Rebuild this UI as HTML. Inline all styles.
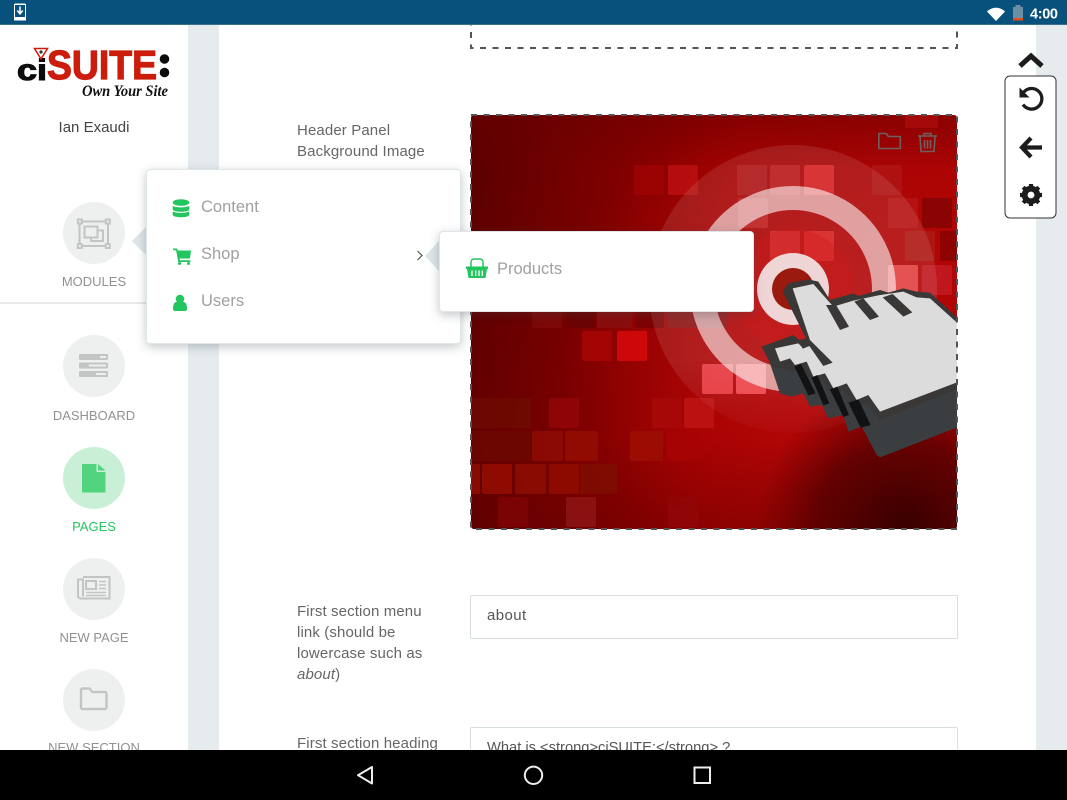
<!DOCTYPE html>
<html><head><meta charset="utf-8"><style>
html,body{margin:0;padding:0;width:1067px;height:800px;overflow:hidden;background:#fff;font-family:"Liberation Sans",sans-serif}
.a{position:absolute;white-space:nowrap}
.lbl{color:#666;font-size:15px;letter-spacing:.12px;line-height:21px}
.nav{color:#8f9292;font-size:13px;text-align:center;width:188px;left:0;line-height:18px}
.c{position:absolute;left:63px;width:62px;height:62px;border-radius:50%;background:#eef0f0}
.m{color:#a0a0a0;font-size:16.5px;line-height:20px}
.box{position:absolute;background:#fff;border:1px solid #e0e6e8;border-radius:4px;box-shadow:0 3px 10px rgba(60,70,80,.3);box-sizing:border-box}
.inp{position:absolute;left:470px;width:488px;height:44px;background:#fff;border:1px solid #d8dfe1;border-radius:2px;box-sizing:border-box}
</style></head><body>
<div class="a" style="left:188px;top:25px;width:31px;height:725px;background:#e6ebee"></div>
<div class="a" style="left:1036px;top:25px;width:31px;height:725px;background:#e6ebee"></div>

<svg class="a" style="left:0;top:0" width="1067" height="800" viewBox="0 0 1067 800">
<defs>
<linearGradient id="bg" x1="0" y1="0" x2="1" y2=".1"><stop offset="0" stop-color="#5a0000"/><stop offset=".3" stop-color="#7e0000"/><stop offset=".55" stop-color="#a00000"/><stop offset="1" stop-color="#ac0404"/></linearGradient>
<radialGradient id="br" gradientUnits="userSpaceOnUse" cx="800" cy="340" r="240"><stop offset="0" stop-color="#c40c0c" stop-opacity=".6"/><stop offset="1" stop-color="#c40c0c" stop-opacity="0"/></radialGradient>
<radialGradient id="dk" gradientUnits="userSpaceOnUse" cx="905" cy="530" r="150"><stop offset="0" stop-color="#380000" stop-opacity="1"/><stop offset=".6" stop-color="#500000" stop-opacity=".75"/><stop offset="1" stop-color="#600000" stop-opacity="0"/></radialGradient>
<linearGradient id="tp" x1="0" y1="0" x2="0" y2="1"><stop offset="0" stop-color="#6a0000" stop-opacity=".5"/><stop offset="1" stop-color="#6a0000" stop-opacity="0"/></linearGradient>
<linearGradient id="bt" x1="0" y1="0" x2="0" y2="1"><stop offset="0" stop-color="#500000" stop-opacity="0"/><stop offset="1" stop-color="#500000" stop-opacity=".3"/></linearGradient>
<linearGradient id="fade" x1="0" y1="0" x2="0" y2="1"><stop offset="0" stop-color="#fff" stop-opacity=".1"/><stop offset=".75" stop-color="#fff" stop-opacity=".1"/><stop offset="1" stop-color="#fff" stop-opacity=".02"/></linearGradient>
<clipPath id="img"><rect x="471" y="115" width="486" height="414" rx="3"/></clipPath>
</defs>
<rect x="471" y="-20" width="486" height="68" fill="none" stroke="#555" stroke-width="2" stroke-dasharray="6 6.5"/>
<g clip-path="url(#img)">
<rect x="471" y="115" width="486" height="414" fill="url(#bg)"/>
<rect x="471" y="115" width="486" height="414" fill="url(#br)"/>
<rect x="471" y="115" width="486" height="55" fill="url(#tp)"/>
<rect x="471" y="440" width="486" height="90" fill="url(#bt)"/>
<g opacity=".85">
<rect x="634" y="165" width="30" height="30" rx="2" fill="#9e0404"/><rect x="668" y="165" width="30" height="30" rx="2" fill="#bb1010"/>
<rect x="737" y="165" width="30" height="30" rx="2" fill="#b01818"/><rect x="770" y="165" width="30" height="30" rx="2" fill="#bc1c1c"/><rect x="804" y="165" width="30" height="30" rx="2" fill="#dc2626"/><rect x="872" y="165" width="30" height="30" rx="2" fill="#b01414"/>
<rect x="905" y="115" width="33" height="13" fill="#a80c0c"/>
<rect x="738" y="198" width="30" height="30" rx="2" fill="#c02020"/><rect x="888" y="198" width="30" height="30" rx="2" fill="#b81414"/><rect x="922" y="198" width="30" height="30" rx="2" fill="#850404"/>
<rect x="770" y="231" width="30" height="30" rx="2" fill="#d42828"/><rect x="804" y="231" width="30" height="30" rx="2" fill="#dc2424"/><rect x="905" y="231" width="30" height="30" rx="2" fill="#ae1a14"/><rect x="940" y="231" width="30" height="30" rx="2" fill="#890202"/>
<rect x="888" y="265" width="30" height="30" rx="2" fill="#ea4a4a"/><rect x="922" y="265" width="30" height="30" rx="2" fill="#c21a22"/>
<rect x="532" y="298" width="30" height="30" rx="2" fill="#7e0a0a"/><rect x="567" y="298" width="29" height="30" rx="2" fill="#690404"/><rect x="597" y="298" width="35" height="30" rx="2" fill="#8a1010"/><rect x="635" y="298" width="29" height="30" rx="2" fill="#7a0404"/><rect x="668" y="298" width="60" height="30" rx="2" fill="#8a1414"/>
<rect x="582" y="331" width="30" height="30" rx="2" fill="#a80404"/><rect x="617" y="331" width="30" height="30" rx="2" fill="#d80a0a"/>
<rect x="702" y="364" width="31" height="30" rx="2" fill="#f04048"/><rect x="736" y="364" width="30" height="30" rx="2" fill="#f85058"/>
<rect x="471" y="398" width="60" height="30" fill="#6e0a02"/><rect x="549" y="398" width="30" height="30" rx="2" fill="#930606"/><rect x="652" y="398" width="30" height="30" rx="2" fill="#a80808"/><rect x="684" y="398" width="30" height="30" rx="2" fill="#c01414"/>
<rect x="471" y="431" width="60" height="30" fill="#6c0802"/><rect x="532" y="431" width="31" height="30" rx="2" fill="#8f0c04"/><rect x="565" y="431" width="33" height="30" rx="2" fill="#950e04"/><rect x="630" y="431" width="33" height="30" rx="2" fill="#9e0e04"/><rect x="667" y="431" width="30" height="30" rx="2" fill="#a80404"/>
<rect x="471" y="464" width="9" height="30" fill="#8e0e02"/><rect x="482" y="464" width="30" height="30" rx="2" fill="#960e02"/><rect x="515" y="464" width="31" height="30" rx="2" fill="#8e0e02"/><rect x="549" y="464" width="30" height="30" rx="2" fill="#920c02"/><rect x="580" y="464" width="37" height="30" fill="#7f0e02"/>
<rect x="498" y="497" width="30" height="30" rx="2" fill="#7e0404"/><rect x="566" y="497" width="30" height="30" rx="2" fill="#8f1414"/><rect x="668" y="497" width="30" height="30" rx="2" fill="#900606"/>
</g>
<rect x="471" y="115" width="486" height="414" fill="url(#dk)"/>
<circle cx="793" cy="289" r="144" fill="url(#fade)"/>
<path fill-rule="evenodd" d="M793 186a103 103 0 1 0 .01 0zM793 210a79 79 0 1 1-.01 0z" fill="#fff" fill-opacity=".58"/>
<circle cx="793" cy="289" r="60" fill="#d01818" fill-opacity=".35"/>
<circle cx="793" cy="289" r="36" fill="#efd5d5"/><circle cx="793" cy="289" r="21" fill="#9a1a0e"/>
<g transform="translate(700,110) scale(.33333)">
<path fill="#3a3e40" d="M210 760L240 850L275 860L310 850L330 890L365 885L385 925L430 915L445 965L485 950L530 1035L540 1042L790 945L790 800L540 880L300 740Z"/>
<path fill="#3a3737" d="M248 545L265 520L325 508L355 515L390 570L460 550L475 558L540 540L565 548L610 535L650 545L690 548L790 640L790 830L540 930L500 880L470 892L430 842L395 855L370 812L340 820L310 775L280 785L245 775L215 770L185 710L280 675L298 690L318 685Z"/>
<path fill="#dcdcdc" d="M278 535L340 522L400 590L460 572L540 555L610 545L650 562L690 565L790 655L790 810L540 905L505 855L470 870L440 820L400 835L375 790L340 800L320 755L285 765L270 745L240 755L225 715L295 700L310 715L335 705Z"/>
<path fill="#3a3737" d="M378 585L408 585L447 650L420 660ZM463 575L490 565L537 620L510 630ZM548 562L578 552L637 607L610 620ZM298 695L325 685L398 758L370 768L328 708L308 716Z"/>
<path fill="#111214" d="M283 770L303 762L347 850L325 856ZM335 803L352 795L388 880L370 886ZM390 838L412 830L447 915L430 921ZM445 878L475 868L512 945L482 953Z"/>
</g>
<g fill="none" stroke="#6e6060" stroke-width="1.600">
<path d="M878.800 148.500V133.500h7.500l2 3h12v12z" stroke-linejoin="round"/>
<path d="M918 136h19M924 136v-2.500h7V136M920 136.500l1 15h13l1-15M924.500 140v8.500M927.500 140v8.500M930.500 140v8.500"/>
</g>
</g>
<rect x="471" y="115" width="486" height="414" fill="none" stroke="#555" stroke-width="2" stroke-dasharray="6 6.5"/>
<rect x="0" y="302" width="148" height="2" fill="#e6e8ea"/>
</svg>

<!-- logo -->
<svg class="a" style="left:0;top:40px" width="188" height="70" viewBox="0 40 188 70">
<text x="17" y="80" font-family="Liberation Sans" font-weight="700" font-size="30" fill="#0c0c0c" stroke="#0c0c0c" stroke-width="1.100" textLength="30" lengthAdjust="spacingAndGlyphs">ci</text>
<text x="47" y="79" font-family="Liberation Sans" font-weight="700" font-size="41" fill="#cc1c0c" stroke="#cc1c0c" stroke-width="1.200" textLength="110" lengthAdjust="spacingAndGlyphs">SUITE</text>
<path d="M34.500 48.500h13l-6.500 10.500z" fill="#fff" stroke="#cc1c0c" stroke-width="1.500"/>
<circle cx="41" cy="52" r="1.600" fill="#333"/>
<circle cx="164.500" cy="59" r="4.800" fill="#0c0c0c"/><circle cx="164.500" cy="72.500" r="4.800" fill="#0c0c0c"/>
<text x="82" y="96" font-family="Liberation Serif" font-style="italic" font-weight="700" font-size="16" fill="#111" textLength="86" lengthAdjust="spacingAndGlyphs">Own Your Site</text>
</svg>
<div class="a" style="left:0;width:188px;text-align:center;top:119px;font-size:15px;color:#444;line-height:18px">Ian Exaudi</div>

<!-- sidebar -->
<div class="c" style="top:202px"></div>
<svg class="a" style="left:75px;top:217px" width="38" height="34" viewBox="75 217 38 34" fill="none" stroke="#c3c5c5" stroke-width="2">
<path d="M81 221.500h25M81 246h25M79.500 223.500v21M108 223.500v21"/>
<rect x="77.800" y="219.500" width="4" height="4"/><rect x="105.800" y="219.500" width="4" height="4"/><rect x="77.800" y="244" width="4" height="4"/><rect x="105.800" y="244" width="4" height="4"/>
<rect x="84.500" y="226.500" width="13" height="11"/><path d="M97.500 230.500h5.500v10.500h-12v-3.500"/>
</svg>
<div class="a nav" style="top:273px">MODULES</div>
<div class="c" style="top:335px"></div>
<svg class="a" style="left:79px;top:354px" width="30" height="24" viewBox="79 354 30 24">
<rect x="79" y="354" width="29" height="6" rx="1" fill="#c3c5c5"/><rect x="79" y="362.500" width="29" height="6" rx="1" fill="#c3c5c5"/><rect x="79" y="371" width="29" height="6" rx="1" fill="#c3c5c5"/>
<rect x="100" y="356" width="6" height="2" fill="#eef0f0"/><rect x="89" y="364.500" width="17" height="2" fill="#eef0f0"/><rect x="96" y="373" width="10" height="2" fill="#eef0f0"/>
</svg>
<div class="a nav" style="top:407px">DASHBOARD</div>
<div class="c" style="top:447px;background:#c9f0d6"></div>
<svg class="a" style="left:81px;top:463px" width="26" height="30" viewBox="81 463 26 30"><path d="M82 464h14.500v8h9v20.500h-23.500z" fill="#52d47e"/><path d="M98 464l7.500 6.500h-7.500z" fill="#52d47e"/></svg>
<div class="a nav" style="top:518px;color:#22c55e">PAGES</div>
<div class="c" style="top:558px"></div>
<svg class="a" style="left:76px;top:575px" width="36" height="26" viewBox="76 575 36 26" fill="none" stroke="#c3c5c5" stroke-width="2">
<path d="M83 577h26.500v21.500h-29a2.500 2.500 0 0 1-2.500-2.500v-16.500h5v17"/>
<rect x="86" y="581" width="10" height="8"/><path d="M99 581.500h7M99 585h7M99 588.500h7M86 592.500h20M86 595.500h20" stroke-width="1.500"/>
</svg>
<div class="a nav" style="top:629px">NEW PAGE</div>
<div class="c" style="top:669px"></div>
<svg class="a" style="left:79px;top:687px" width="30" height="25" viewBox="79 687 30 25" fill="none" stroke="#c3c5c5" stroke-width="2.400"><path d="M81 708V690a1.500 1.500 0 0 1 1.500-1.500h7l3 3.500h12.500a1.500 1.500 0 0 1 1.500 1.500v14a1.500 1.500 0 0 1-1.500 1.500h-22.500a1.500 1.500 0 0 1-1.500-1.500z" stroke-linejoin="round"/></svg>
<div class="a nav" style="top:739px">NEW SECTION</div>

<!-- form -->
<div class="a lbl" style="left:297px;top:120px">Header Panel<br>Background Image</div>
<div class="a lbl" style="left:297px;top:601px">First section menu<br>link (should be<br>lowercase such as<br><i>about</i>)</div>
<div class="a lbl" style="left:297px;top:733px">First section heading</div>
<div class="inp" style="top:595px"></div>
<div class="a lbl" style="left:487px;top:605px;color:#555;letter-spacing:.4px">about</div>
<div class="inp" style="top:727px;height:60px"></div>
<div class="a lbl" style="left:487px;top:738px;color:#555;font-size:14.700px;letter-spacing:0">What is &lt;strong&gt;ciSUITE:&lt;/strong&gt; ?</div>

<!-- menu -->
<svg class="a" style="left:130px;top:222px" width="20" height="38"><path d="M2 19L18 3V35Z" fill="#dde5e8"/></svg>
<div class="box" style="left:146px;top:169px;width:315px;height:175px"></div>
<svg class="a" style="left:170px;top:197px" width="24" height="120" viewBox="170 197 24 120" fill="#22c55e">
<ellipse cx="181" cy="202.500" rx="8.300" ry="3.300"/>
<path d="M172.700 205.500c1 2.500 15.600 2.500 16.600 0v4c-1 3-15.600 3-16.600 0zM172.700 211c1 2.500 15.600 2.500 16.600 0v4c-1 3-15.600 3-16.600 0z"/>
<path d="M173 248.500h4l.9 2h13.100l-1 8h-10.300l.3 1.700h10.500v1.800h-12.200l-2.200-11.700h-3.100z"/>
<circle cx="179.500" cy="263.500" r="1.500"/><circle cx="188.500" cy="263.500" r="1.500"/>
<circle cx="180" cy="299" r="4.300"/><path d="M173 309c0-6 2-7 4-7h6c2 0 4 1 4 7 0 1-.8 2-2 2h-10c-1.200 0-2-1-2-2z"/>
</svg>
<div class="a m" style="left:201px;top:197px">Content</div>
<div class="a m" style="left:201px;top:244px">Shop</div>
<div class="a m" style="left:201px;top:291px">Users</div>
<svg class="a" style="left:416px;top:250px" width="8" height="12"><path d="M1.500 1L6 5.500L1.500 10" fill="none" stroke="#555" stroke-width="1.200"/></svg>
<svg class="a" style="left:423px;top:238px" width="18" height="36"><path d="M2 18L16 3V33Z" fill="#dde5e8"/></svg>
<div class="box" style="left:439px;top:231px;width:315px;height:81px"></div>
<svg class="a" style="left:465px;top:258px" width="24" height="22" viewBox="465 258 24 22">
<path d="M471 267v-4.500c0-2.500 1.500-3.500 3-3.500h6c1.500 0 3 1 3 3.500v4.500" fill="none" stroke="#22c55e" stroke-width="1.500"/>
<path d="M466 266.500h22v2.500h-1l-1.500 9h-17l-1.500-9h-1z" fill="#22c55e"/>
<path d="M472 270.500v5.500M475.700 270.500v5.500M479 270.500v5.500M482.300 270.500v5.500" stroke="#fff" stroke-width="1.300"/>
</svg>
<div class="a m" style="left:497px;top:259px">Products</div>

<!-- toolbar -->
<svg class="a" style="left:1004px;top:50px" width="54" height="170" viewBox="1004 50 54 170">
<path d="M1020 66l11-10 11 10" fill="none" stroke="#1c1c1c" stroke-width="5"/>
<rect x="1005" y="76" width="51" height="142" rx="5" fill="#fff" stroke="#333" stroke-width="1"/>
<path d="M1023.800 92a10.300 10.300 0 1 1-.8 12.500" fill="none" stroke="#1c1c1c" stroke-width="3.300"/>
<path d="M1019.500 87.500v10h10z" fill="#1c1c1c"/>
<path d="M1031 138l-9 9.500 9 9.500M1023 147.500h19" fill="none" stroke="#1c1c1c" stroke-width="4.200"/>
<circle cx="1031" cy="195" r="7" fill="none" stroke="#1c1c1c" stroke-width="4.500"/>
<path d="M1031 184v22M1020 195h22M1023.200 187.200l15.600 15.600M1038.800 187.200l-15.600 15.600" stroke="#1c1c1c" stroke-width="4.200"/>
<circle cx="1031" cy="195" r="3.400" fill="#fff"/>
</svg>

<!-- status -->
<div class="a" style="left:0;top:0;width:1067px;height:25px;background:#07517c;border-bottom:1px solid #3d6f8e;box-sizing:border-box"></div>
<svg class="a" style="left:0;top:0" width="1067" height="25">
<path d="M15.500 3.500h9a1.500 1.500 0 0 1 1.500 1.500v15.500h-12v-15.500a1.500 1.500 0 0 1 1.500-1.500z" fill="#fff"/>
<rect x="15" y="5" width="10" height="12" fill="#07517c"/>
<path d="M20 6.500v6.500M17.300 10.500l2.700 3.300 2.700-3.300" fill="none" stroke="#fff" stroke-width="1.500"/>
<path d="M987 11.500c5-5 13-5 18 0l-9 9.500z" fill="#fff"/>
<rect x="1015.500" y="5" width="5" height="2" fill="#6d8fa6"/><rect x="1013" y="7" width="10" height="11" fill="#6d8fa6"/><rect x="1013" y="18" width="10" height="2.500" fill="#e0501c"/>
<text x="1030" y="18.500" font-family="Liberation Sans" font-weight="700" font-size="14.500" fill="#fff" textLength="28">4:00</text>
</svg>

<!-- nav bar -->
<div class="a" style="left:0;top:750px;width:1067px;height:50px;background:#000"></div>
<svg class="a" style="left:0;top:750px" width="1067" height="50" viewBox="0 750 1067 50" fill="none" stroke="#eee" stroke-width="2">
<path d="M372 767v16.500l-14-8.300z" stroke-linejoin="round"/>
<circle cx="533.500" cy="775.300" r="8.700"/>
<rect x="694.500" y="767.500" width="15.500" height="15.500"/>
</svg>
</body></html>
